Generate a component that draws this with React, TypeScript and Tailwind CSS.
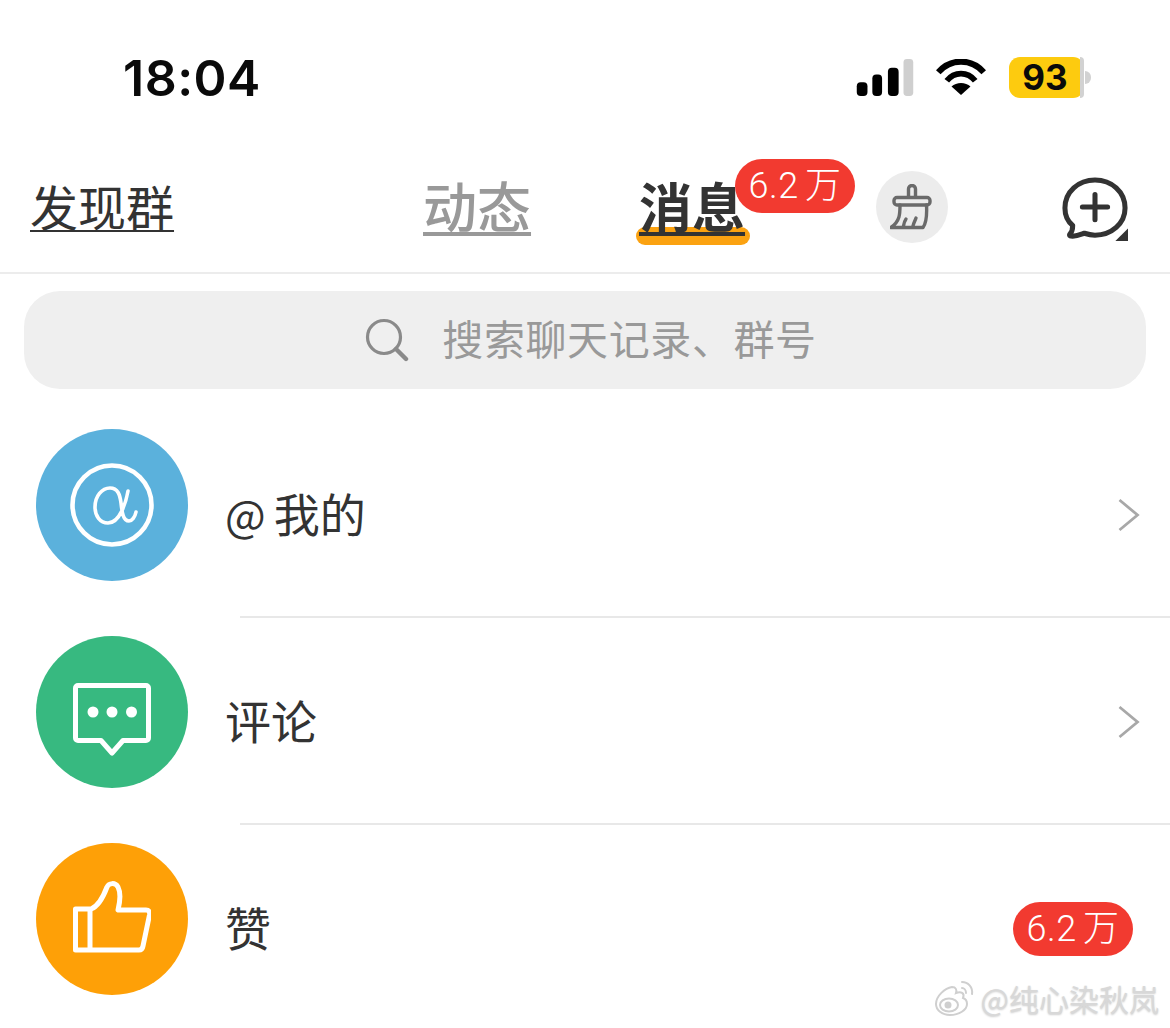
const font = { fontFamily: '"Noto Sans CJK SC", "Noto Sans", sans-serif' };

function Chevron() {
  return (
    <svg width="22" height="34" viewBox="0 0 22 34" fill="none" className="shrink-0">
      <path d="M1.500 2 L19.500 17 L1.500 32" stroke="#a8a8a8" strokeWidth="2.8" />
    </svg>
  );
}

function Badge() {
  return (
    <div className="flex h-[54px] w-[120px] items-center justify-center rounded-full bg-[#f23a30] text-[36px] tracking-[0.5px] text-white [word-spacing:-3px]">
      <span className="font-['Roboto','Noto_Sans_CJK_SC',sans-serif]" style={{ fontWeight: 300 }}>6.2 万</span>
    </div>
  );
}

function Row({
  color,
  icon,
  label,
  right,
  divider,
}: {
  color: string;
  icon: React.ReactNode;
  label: React.ReactNode;
  right: React.ReactNode;
  divider?: boolean;
}) {
  return (
    <div className="relative h-[207px] pl-[36px] pt-[18px]">
      <div className="flex h-[152px] items-center">
        <div className={`flex h-[152px] w-[152px] shrink-0 items-center justify-center rounded-full ${color}`}>{icon}</div>
        <div className="ml-[37px] mt-[14px] flex-1 text-[46px] leading-none text-[#333333]">{label}</div>
        <div className="mt-[20px]">{right}</div>
      </div>
      {divider && <div className="absolute bottom-0 left-[240px] right-0 h-[2px] bg-[#e8e8e8]" />}
    </div>
  );
}

export default function App() {
  return (
    <div className="relative h-[1028px] w-[1170px] overflow-hidden bg-white" style={font}>
      {/* status bar */}
      <div className="flex h-[156px] items-center pl-[123px] pr-[79px]">
        <div className="flex-1 text-[50px] font-semibold leading-none tracking-[0.5px] text-[#0a0a0a] font-['Inter',sans-serif]">18:04</div>
        <svg width="58" height="37" viewBox="0 0 58 38" className="mt-[-1px]">
          <rect x="0" y="24" width="11" height="14" rx="4" fill="#000" />
          <rect x="16" y="16" width="10" height="22" rx="4" fill="#000" />
          <rect x="32" y="9" width="11" height="29" rx="4" fill="#000" />
          <rect x="48" y="0" width="10" height="38" rx="3.5" fill="#cfcfcf" />
        </svg>
        <svg width="50" height="36" viewBox="0 0 52 38" className="ml-[22px] mt-[-2px]">
          <path d="M2 14 C15 -1 37 -1 50 14" stroke="#000" strokeWidth="6.4" fill="none" />
          <path d="M11 23 C19 13 33 13 41 23" stroke="#000" strokeWidth="6.2" fill="none" />
          <path d="M26 38 L16 29 C21 24 31 24 36 29 Z" fill="#000" />
        </svg>
        <div className="relative ml-[23px] mt-[-1px] flex h-[41px] w-[75px] items-center justify-center rounded-[11px] bg-[#fdcb0f] pr-[3px]">
          <span className="text-[35px] font-bold leading-none text-[#0a0a0a] font-['Inter',sans-serif]">93</span>
          <div className="absolute right-0 top-0 h-full w-[4px] rounded-r-[11px] bg-[#d2d2d2]" />
        </div>
        <div className="ml-[1px] mt-[-1px] h-[13px] w-[6px] rounded-r-full bg-[#d2d2d2]" />
      </div>

      {/* header */}
      <div className="relative flex h-[118px] items-center border-b-2 border-[#ececec] pb-[18px] pl-[30px]">
        <div className="text-[48px] leading-none text-[#333333] underline decoration-[2px] underline-offset-[4px]">发现群</div>
        <div className="ml-[249px] text-[54px] font-medium leading-none text-[#999999] underline decoration-[4px] underline-offset-[4px]">动态</div>
        <div className="relative ml-[108px]">
          <div className="absolute -bottom-[13px] -left-[3px] -right-[5px] h-[18px] rounded-full bg-[#fba211]" />
          <div className="relative text-[53px] font-bold leading-none text-[#333333] underline decoration-[4px] underline-offset-[4px]">消息</div>
          <div className="absolute -right-[110px] -top-[20px]">
            <Badge />
          </div>
        </div>
        <div className="ml-[131px] mt-[3px] flex h-[72px] w-[72px] items-center justify-center rounded-full bg-[#ececec]">
          <svg width="44" height="46" viewBox="-2 0 44 46" fill="none" stroke="#6a6a6a" strokeWidth="3.4" strokeLinejoin="round" strokeLinecap="round">
            <path d="M16.500 13 V5 a3.500 3.500 0 0 1 7 0 V13" />
            <rect x="2" y="13.500" width="36" height="7.500" rx="3" />
            <path d="M8 21 C8 30 8 37 -1 43.500 H31 C35 38 35 30 34.500 21" />
            <path d="M11.500 42 C12 39 12.500 37 14 35 M21 42 C21.500 39 23 37 24 34" />
          </svg>
        </div>
        <svg width="68" height="64" viewBox="0 0 70 66" fill="none" className="ml-[113px] mt-[7px]">
          <path d="M35 3 C18 3 4 15 4 32 C4 40 7 46 12 50 C12 54 11 57 9 59 C8 61 10 61 12 61 C17 61 21 59 24 58 C27 59 31 60 35 60 C52 60 66 48 66 32 C66 15 52 3 35 3 Z" stroke="#333" strokeWidth="5.2" strokeLinejoin="round" />
          <path d="M35 18 V44 M22 31 H48" stroke="#333" strokeWidth="5.2" strokeLinecap="round" />
          <path d="M69 53 V66 H56 Z" fill="#333" />
        </svg>
      </div>

      {/* search */}
      <div className="mx-[24px] mt-[17px] flex h-[98px] items-center justify-center gap-[33px] rounded-[36px] bg-[#efefef] pl-[12px]">
        <svg width="44" height="44" viewBox="0 0 44 44" fill="none" stroke="#8a8a8a" strokeLinecap="round" className="mt-[-1px]">
          <circle cx="19" cy="19" r="16.5" strokeWidth="3.2" />
          <path d="M31 31 L41 41" strokeWidth="4.4" />
        </svg>
        <div className="mb-[5px] text-[41px] leading-none tracking-[0.6px] text-[#999999]">搜索聊天记录、群号</div>
      </div>

      {/* list */}
      <div className="mt-[22px]">
        <Row
          color="bg-[#5bb1dc]"
          divider
          label={<span><span className="text-[43px]">@</span><span className="ml-[8px]">我的</span></span>}
          icon={
            <svg width="86" height="86" viewBox="0 0 86 86" fill="none" stroke="#fff">
              <circle cx="43" cy="43" r="39.5" strokeWidth="4.6" />
              <path d="M59 29 C57 40 51 61 39 61 C31 61 26 54 26 45 C26 34 33 26 41 26 C49 26 51 33 52 41 C53 50 54 59 60 59 C63 59 66 55 67 50" strokeWidth="3.6" strokeLinecap="round" />
            </svg>
          }
          right={<div className="mr-[30px]"><Chevron /></div>}
        />
        <Row
          color="bg-[#37b980]"
          divider
          label="评论"
          icon={
            <svg width="78" height="76" viewBox="0 0 78 76" fill="none" className="mt-[17px]">
              <path d="M5 2.5 H73 a2.5 2.5 0 0 1 2.5 2.5 V55 a2.5 2.5 0 0 1 -2.5 2.5 H50 L39 70 L28 57.500 H5 a2.500 2.500 0 0 1 -2.500 -2.500 V5 a2.500 2.500 0 0 1 2.500 -2.500 Z" stroke="#fff" strokeWidth="5" strokeLinejoin="round" />
              <circle cx="20" cy="29" r="5.500" fill="#fff" />
              <circle cx="39" cy="29" r="5.500" fill="#fff" />
              <circle cx="58.500" cy="29" r="5.500" fill="#fff" />
            </svg>
          }
          right={<div className="mr-[30px]"><Chevron /></div>}
        />
        <Row
          color="bg-[#fea007]"
          label="赞"
          icon={
            <svg width="78" height="72" viewBox="0 0 78 72" fill="none" stroke="#fff" strokeWidth="5" strokeLinejoin="round" className="mt-[-5px]">
              <path d="M2.500 28 H18 C26 25 31 14 34 6 C36 2 42 1 45 6 C48 12 47 21 45 29 H73 C76 29 77 31 76.500 34 L70 65 C69.500 68 68 69 66 69 H2.500 Z" />
              <path d="M17 28 V69" />
            </svg>
          }
          right={<div className="mr-[37px]"><Badge /></div>}
        />
      </div>

      {/* watermark */}
      <div className="absolute bottom-[12px] right-[11px] flex items-center gap-[6px] text-[#d8d8d8] [text-shadow:0_1px_2px_rgba(0,0,0,0.2)]">
        <svg width="42" height="36" viewBox="0 0 42 36" fill="none" stroke="#cfcfcf" strokeWidth="2">
          <path d="M3 24 C3 16 12 8 19 7 C23 7 24 10 23 13 C28 11 32 13 30 18 C33 19 34 21 34 24 C34 30 26 35 17 35 C9 35 3 30 3 24 Z" fill="#fff" />
          <ellipse cx="16" cy="25" rx="9" ry="6.500" />
          <circle cx="15" cy="25" r="2.500" fill="#cfcfcf" />
          <path d="M29 8 C31 8 33 10 33 13 M29 2 C35 2 40 7 39 14" strokeLinecap="round" />
        </svg>
        <span className="text-[30px] leading-none">@纯心染秋岚</span>
      </div>
    </div>
  );
}
